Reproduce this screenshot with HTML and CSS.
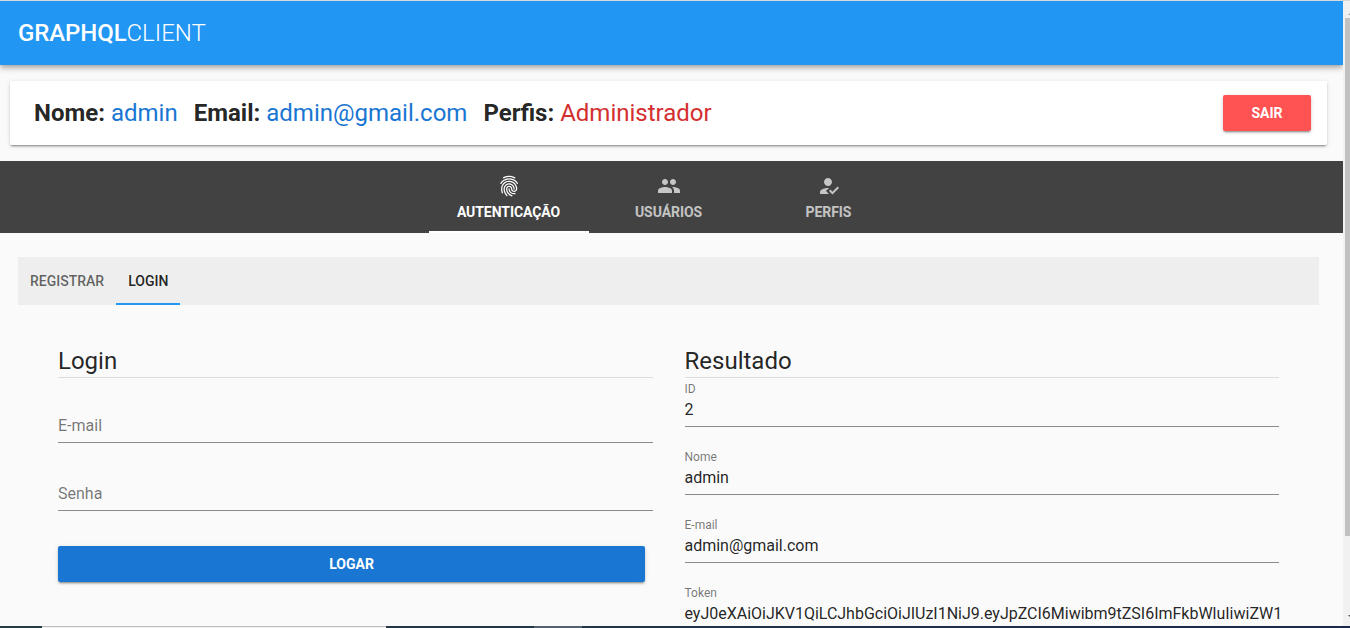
FILE: index.html
```html
<!DOCTYPE html>
<html lang="pt-BR">
<head>
<meta charset="utf-8">
<title>GraphQL Client</title>
<link rel="stylesheet" href="styles.css">
</head>
<body>
<div class="window">
<div class="viewport">
  <main class="page">
    <header class="toolbar"><span class="brand">GRAPHQL</span><span class="light">CLIENT</span></header>
    <section class="card">
      <div class="info"><b>Nome:</b> <span class="blue">admin</span></div>
      <div class="info"><b>Email:</b> <span class="blue">admin@gmail.com</span></div>
      <div class="info"><b>Perfis:</b> <span class="red">Administrador</span></div>
      <button class="btn logout">SAIR</button>
    </section>
    <nav class="tabs">
      <a class="tab active">
        <svg class="icon" viewBox="0 0 24 24"><path d="M11.83,1.73C8.43,1.79 6.23,3.32 6.23,3.32C5.95,3.5 5.88,3.91 6.07,4.19C6.27,4.5 6.66,4.53 6.96,4.34C6.96,4.34 11.27,1.15 17.46,4.38C17.75,4.55 18.14,4.45 18.31,4.15C18.5,3.85 18.37,3.47 18.03,3.28C16.36,2.4 14.78,1.96 13.36,1.8C12.83,1.74 12.32,1.72 11.83,1.73M12.22,4.34C6.26,4.26 3.41,9.05 3.41,9.05C3.22,9.34 3.3,9.72 3.58,9.91C3.87,10.1 4.26,10 4.5,9.68C4.5,9.68 6.92,5.5 12.2,5.59C17.5,5.66 19.82,9.65 19.82,9.65C20,9.94 20.38,10.04 20.68,9.87C21,9.69 21.07,9.31 20.9,9C20.9,9 18.15,4.42 12.22,4.34M11.5,6.82C9.82,6.94 8.21,7.55 7,8.56C4.62,10.53 3.1,14.14 4.77,19C4.88,19.33 5.24,19.5 5.57,19.39C5.89,19.28 6.07,18.92 5.95,18.58V18.6C4.41,14.13 5.78,11.2 7.8,9.5C9.77,7.89 13.25,7.5 15.84,9.1C17.11,9.9 18.1,11.28 18.6,12.64C19.11,14 19.08,15.32 18.67,15.94C18.25,16.59 17.4,16.83 16.65,16.64C15.9,16.45 15.29,15.91 15.26,14.77C15.23,13.06 13.89,12 12.5,11.84C11.16,11.68 9.61,12.4 9.21,14C8.45,16.92 10.36,21.07 14.78,22.45C15.11,22.55 15.46,22.37 15.57,22.04C15.67,21.71 15.5,21.35 15.15,21.25C11.32,20.06 9.87,16.43 10.42,14.29C10.66,13.33 11.5,13 12.38,13.08C13.25,13.18 14,13.7 14,14.79C14.05,16.43 15.12,17.54 16.34,17.85C17.56,18.16 18.97,17.77 19.72,16.62C20.5,15.45 20.37,13.8 19.78,12.21C19.18,10.61 18.07,9.03 16.5,8.04C14.96,7.08 13.19,6.7 11.5,6.82M11.86,9.25V9.26C10.08,9.32 8.3,10.24 7.28,12.18C5.96,14.67 6.56,17.21 7.44,19.04C8.33,20.88 9.54,22.1 9.54,22.1C9.78,22.35 10.17,22.35 10.42,22.11C10.67,21.87 10.67,21.5 10.43,21.23C10.43,21.23 9.36,20.13 8.57,18.5C7.78,16.87 7.3,14.81 8.38,12.77C9.5,10.67 11.5,10.16 13.26,10.67C15.04,11.19 16.53,12.74 16.5,15.03C16.46,15.38 16.71,15.68 17.06,15.7C17.4,15.73 17.7,15.47 17.73,15.06C17.79,12.2 15.87,10.13 13.61,9.47C13.04,9.31 12.45,9.23 11.86,9.25M12.08,14.25C11.73,14.26 11.46,14.55 11.47,14.89C11.47,14.89 11.5,16.37 12.31,17.8C13.15,19.23 14.93,20.59 18.03,20.3C18.37,20.28 18.64,20 18.62,19.64C18.6,19.29 18.3,19.03 17.91,19.06C15.19,19.31 14.04,18.28 13.39,17.17C12.74,16.07 12.72,14.88 12.72,14.88C12.72,14.53 12.44,14.25 12.08,14.25Z"/></svg>
        AUTENTICAÇÃO
      </a>
      <a class="tab">
        <svg class="icon" viewBox="0 0 24 24"><path d="M16 11c1.66 0 2.99-1.34 2.99-3S17.66 5 16 5s-3 1.34-3 3 1.34 3 3 3zm-8 0c1.66 0 2.99-1.34 2.99-3S9.66 5 8 5 5 6.34 5 8s1.34 3 3 3zm0 2c-2.33 0-7 1.17-7 3.5V19h14v-2.500C15 14.170 10.330 13 8 13zm8 0c-.29 0-.62.02-.97.05 1.160.84 1.970 1.970 1.970 3.450V19h6v-2.500c0-2.330-4.670-3.500-7-3.500z"/></svg>
        USUÁRIOS
      </a>
      <a class="tab">
        <svg class="icon" viewBox="0 0 24 24"><path d="M9 17l3-2.940c-.39-.04-.68-.06-1-.06-2.670 0-8 1.340-8 4v2h9l-3-3zm2-5c2.210 0 4-1.790 4-4s-1.790-4-4-4-4 1.790-4 4 1.790 4 4 4m4.470 8.500L12 17l1.400-1.410 2.070 2.080 5.130-5.170 1.400 1.410z"/></svg>
        PERFIS
      </a>
    </nav>
    <nav class="subtabs"><a class="subtab">REGISTRAR</a><a class="subtab current">LOGIN</a></nav>
    <section class="columns">
      <form class="column">
        <h2 class="title">Login</h2>
        <div class="field"><span class="placeholder">E-mail</span></div>
        <div class="field"><span class="placeholder">Senha</span></div>
        <button class="btn submit" type="button">LOGAR</button>
      </form>
      <div class="column result">
        <h2 class="title">Resultado</h2>
        <div class="field"><label class="label">ID</label><span class="value">2</span></div>
        <div class="field"><label class="label">Nome</label><span class="value">admin</span></div>
        <div class="field"><label class="label">E-mail</label><span class="value">admin@gmail.com</span></div>
        <div class="field"><label class="label">Token</label><span class="value">eyJ0eXAiOiJKV1QiLCJhbGciOiJIUzI1NiJ9.eyJpZCI6Miwibm9tZSI6ImFkbWluIiwiZW1</span></div>
      </div>
    </section>
  </main>
  <aside class="scrollbar"><i class="arrow up"></i><i class="thumb"></i><i class="arrow down"></i></aside>
</div>
<footer class="taskbar"><i class="search"></i><i class="task"></i></footer>
</div>
</body>
</html>
```
FILE: styles.css
```css
* { box-sizing: border-box; }
body { margin: 0; font-family: Roboto, sans-serif; color: rgba(0,0,0,.87); overflow: hidden; }
.window { height: 628px; display: flex; flex-direction: column; overflow: hidden; border-top: 1px solid #d5d7da; background: #fafafa; }
.viewport { flex: 1; min-height: 0; display: flex; overflow: hidden; }
.page { width: 1343px; flex: none; overflow: hidden; }
.toolbar { height: 64px; padding-left: 18px; background: #2196f3; color: #fff; font-size: 24px; line-height: 64px; box-shadow: 0 2px 4px -1px rgba(0,0,0,.2), 0 4px 5px rgba(0,0,0,.14), 0 1px 10px rgba(0,0,0,.12); }
.brand { font-weight: 500; letter-spacing: -.1px; }
.light { font-weight: 300; }
.card { height: 64px; margin: 16px 16px 16px 10px; padding: 0 16px 0 24px; display: flex; align-items: center; gap: 16px; background: #fff; border-radius: 2px; font-size: 24px; box-shadow: 0 3px 1px -2px rgba(0,0,0,.2), 0 2px 2px rgba(0,0,0,.14), 0 1px 5px rgba(0,0,0,.12); }
.info b { font-weight: 700; }
.blue { color: #1976d2; }
.red { color: #d32f2f; }
.btn { height: 36px; padding: 0; border: 0; border-radius: 2px; color: #fff; font: 700 14px Roboto, sans-serif; box-shadow: 0 3px 1px -2px rgba(0,0,0,.2), 0 2px 2px rgba(0,0,0,.14), 0 1px 5px rgba(0,0,0,.12); }
.logout { width: 88px; margin-left: auto; background: #ff5252; }
.tabs { height: 72px; padding-right: 6px; display: flex; justify-content: center; background: #424242; }
.tab { width: 160px; padding-top: 13px; display: flex; flex-direction: column; align-items: center; gap: 6px; color: rgba(255,255,255,.7); font-size: 14px; font-weight: 700; letter-spacing: -.07px; line-height: 16px; border-bottom: 2px solid transparent; }
.tab.active { color: #fff; border-color: #fff; }
.icon { width: 24px; height: 24px; fill: currentColor; }
.subtabs { height: 48px; margin: 24px 24px 0 18px; display: flex; background: #eee; }
.subtab { padding: 0 12px; font-size: 14px; line-height: 48px; font-weight: 500; color: rgba(0,0,0,.6); }
.current { color: rgba(0,0,0,.87); border-bottom: 2px solid #2196f3; }
.columns { margin: 40px 64px 0 58px; display: grid; grid-template-columns: 594.5px 594.5px; column-gap: 32px; }
.title { height: 33px; margin: 0 0 16px; border-bottom: 1px solid #dcdcdc; font-size: 24px; line-height: 32px; font-weight: 400; }
.field { height: 49px; margin-bottom: 19px; border-bottom: 1px solid #8b8b8b; white-space: nowrap; }
.placeholder { display: block; padding-top: 22px; font-size: 16px; line-height: 20px; color: rgba(0,0,0,.54); }
.result .title { margin-bottom: 0; }
.label { display: block; padding-top: 3px; font-size: 12px; line-height: 16px; color: rgba(0,0,0,.54); }
.value { display: block; padding-top: 3px; font-size: 16px; line-height: 20px; }
.result .value { letter-spacing: -.01px; }
.submit { width: 587px; margin-top: 35px; background: #1976d2; display: block; }
.scrollbar { width: 7px; flex: none; background: #f1f1f1; padding-left: 2px; display: flex; flex-direction: column; overflow: hidden; }
.thumb { height: 518px; flex: none; background: #c1c1c1; }
.arrow { flex: none; margin-left: 3px; width: 0; border: 4px solid transparent; }
.up { margin-top: 3px; margin-bottom: 3px; height: 11px; border-bottom: 4px solid #a3a3a3; border-top-width: 4px; }
.down { margin-top: auto; margin-bottom: 3px; border-top-color: #505050; }
.taskbar { height: 2px; flex: none; display: flex; background: linear-gradient(90deg, #233c46, #1b2a48); }
.search { margin-left: 42px; width: 344px; background: #f0f0f0; border-top: 1px solid #bdbdbd; }
.task { margin-left: 148px; width: 48px; background: #536270; }
```
